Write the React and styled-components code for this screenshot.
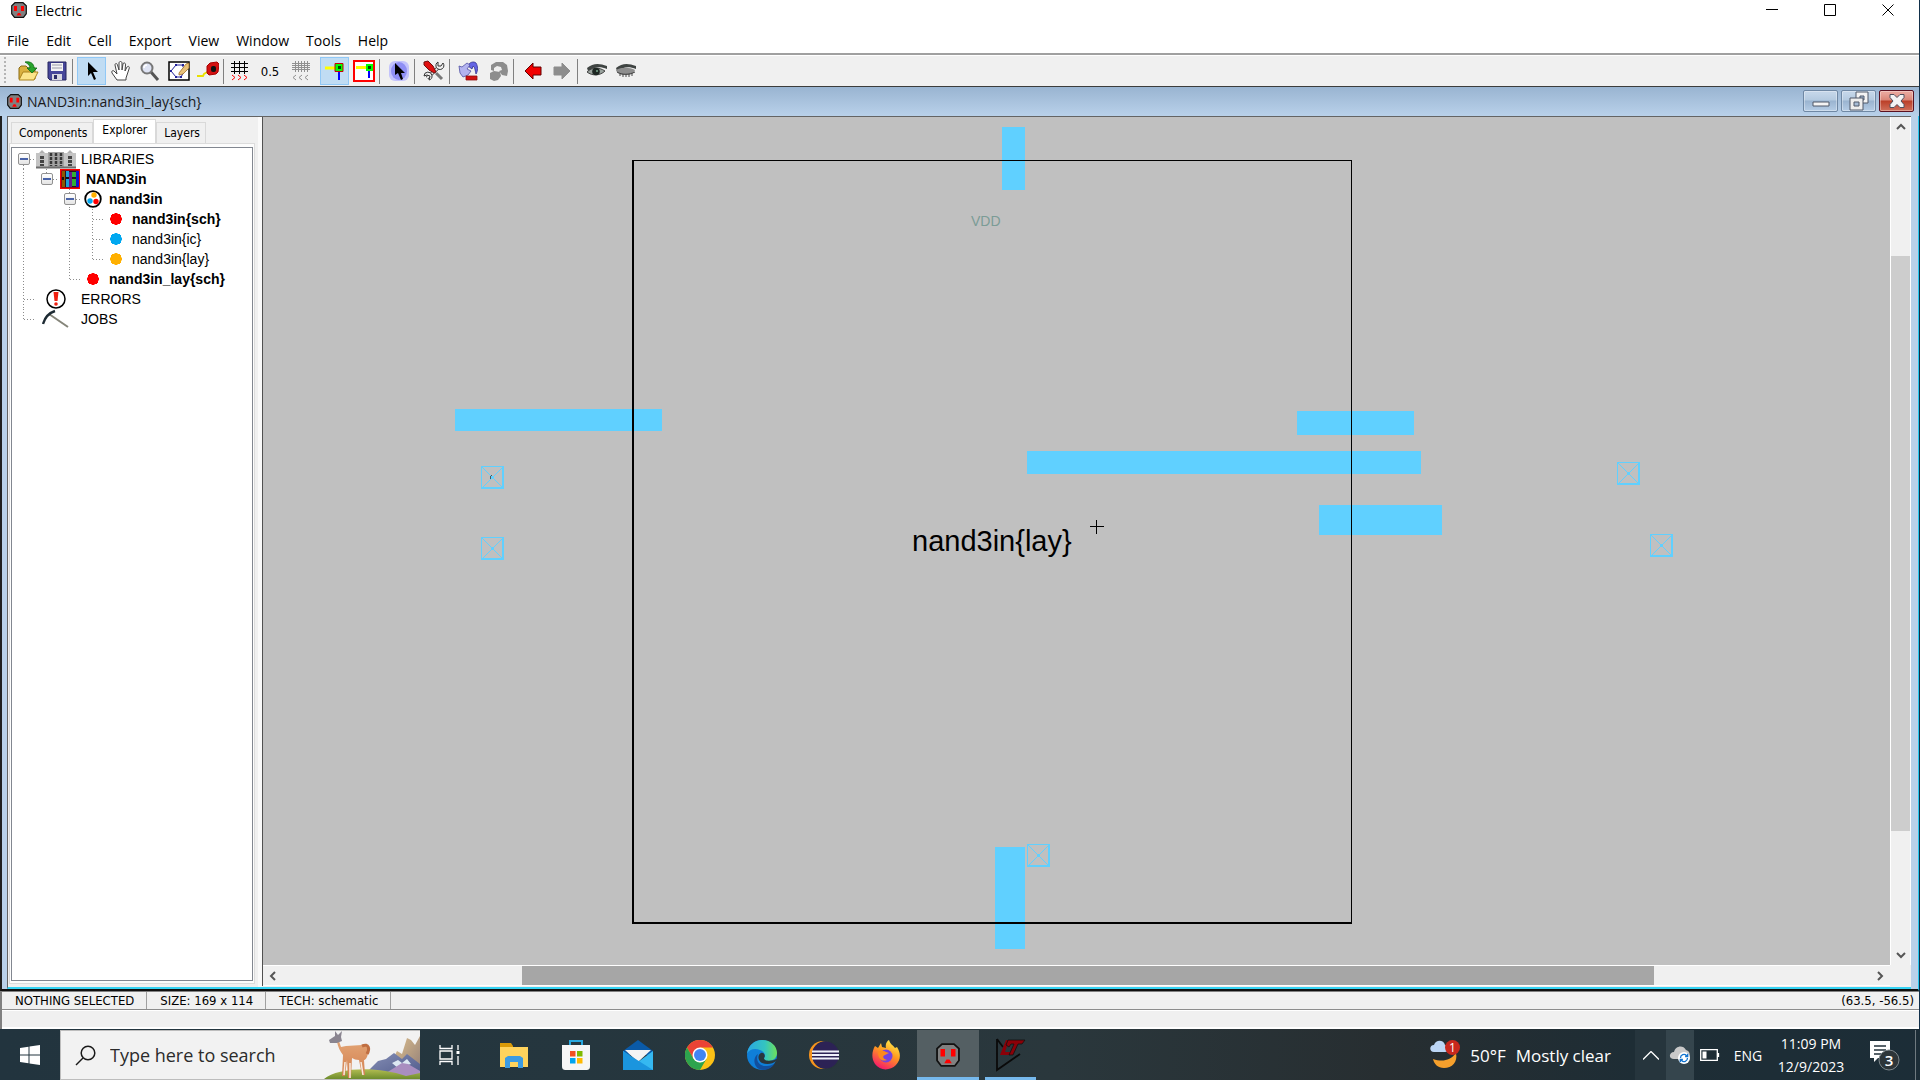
import React from "react";
import styled, { createGlobalStyle, css } from "styled-components";

const UI = '"Open Sans", "Noto Sans", sans-serif';
const TAHOMA = '"DejaVu Sans Condensed", "DejaVu Sans", sans-serif';
const ARIAL = '"Liberation Sans", Arial, sans-serif';

const GlobalStyle = createGlobalStyle`
  * { box-sizing: border-box; }
  body { margin: 0; background: #fff; color: #000; font-family: ${UI}; overflow: hidden; }
  button, input { font: inherit; color: inherit; margin: 0; padding: 0; border: 0; background: none; border-radius: 0; }
  svg { display: block; flex: none; }
`;

const Desktop = styled.div`
  display: flex;
  flex-direction: column;
  height: 100vh;
`;
const AppWindow = styled.main`
  flex: 1;
  min-height: 0;
  display: flex;
  flex-direction: column;
  border-right: 1px solid #12304a;
`;

/* ---------- title and menu ---------- */
const TitleBar = styled.header`
  display: flex;
  align-items: flex-start;
  height: 27px;
  padding: 0 2px 0 11px;
  background: #fff;
`;
const TitleText = styled.h1`
  flex: 1;
  display: flex;
  align-items: center;
  gap: 8px;
  height: 20px;
  margin: 0;
  font-size: 14px;
  font-weight: 400;
`;
const CaptionButton = styled.button`
  width: 58px;
  height: 20px;
  display: grid;
  place-items: center;
`;
const MenuBar = styled.nav`
  display: flex;
  align-items: flex-end;
  height: 28px;
  gap: 17px;
  padding: 0 7px 1px;
  background: #fff;
  border-bottom: 2px solid #a0a0a0;
`;
const MenuItem = styled.button`
  font-size: 14px;
  line-height: 22px;
`;

/* ---------- toolbar ---------- */
const ToolBar = styled.div`
  display: flex;
  align-items: center;
  height: 32px;
  padding-left: 4px;
  background: #f0f0f0;
  border-top: 1px solid #fff;
  border-bottom: 1px solid #3c3c3c;
`;
const Grip = styled.span`
  width: 2px;
  height: 28px;
  margin-right: 7px;
  background: repeating-linear-gradient(to bottom, #b4b4b4 0 2px, transparent 2px 4px);
`;
const ToolButton = styled.button`
  width: ${(p) => (p.$wide ? 32 : 29)}px;
  height: 28px;
  display: grid;
  place-items: center;
  font-family: ${TAHOMA};
  font-size: 13px;
  ${(p) =>
    p.$on &&
    css`
      background: #c0dcf3;
      border: 1px solid #90c8f6;
    `}
`;
const Divider = styled.span`
  width: ${(p) => (p.$tight ? 3 : 6)}px;
  height: 25px;
  background: linear-gradient(#808080, #808080) 1px 0 / 1px 100% no-repeat;
`;
const Spacer = styled.span`
  width: 5px;
`;

/* ---------- document window ---------- */
const DocTitle = styled.div`
  display: flex;
  align-items: center;
  height: 29px;
  padding: 0 5px 1px 7px;
  gap: 5px;
  background: linear-gradient(#99b4d1, #b9d1ea);
`;
const DocName = styled.h2`
  flex: 1;
  margin: 0;
  font-size: 14px;
  font-weight: 400;
  color: #1a1a1a;
`;
const DocButtons = styled.div`
  display: flex;
  gap: 3px;
`;
const DocButton = styled.button`
  width: 35px;
  height: 22px;
  display: grid;
  place-items: center;
  border: 1px solid ${(p) => (p.$close ? "#5a1020" : "#6f88a4")};
  border-radius: 2px;
  background: ${(p) =>
    p.$close
      ? "linear-gradient(#e8a499 0 12%, #d98577 45%, #bb3f28 50%, #d0705c)"
      : "linear-gradient(#c3d5e8 0 12%, #b4cae0 45%, #9ab4d0 50%, #b5cde6)"};
  box-shadow: inset 0 0 0 1px rgba(255, 255, 255, 0.35);
`;
const DocBody = styled.div`
  flex: 1;
  min-height: 0;
  display: flex;
  border-left: 2px solid #202020;
  border-right: 1px solid #28c8f0;
  border-bottom: 2px solid #101010;
  background: #b9d1ea;
  padding: 0 7px 0 5px;
`;
const DocInner = styled.div`
  flex: 1;
  min-width: 0;
  display: flex;
  border-left: 1px solid #646464;
  border-top: 1px solid #646464;
  border-bottom: 2px solid #35d3f3;
  background: #f0f0f0;
`;
const SidePanel = styled.aside`
  width: 254px;
  flex: none;
  display: flex;
  flex-direction: column;
  padding: 1px 3px 3px 1px;
  border-right: 4px solid #fafafa;
`;
const Tabs = styled.div`
  display: flex;
  align-items: flex-end;
  height: 25px;
  padding-left: 2px;
`;
const Tab = styled.button`
  height: ${(p) => (p.$active ? 24 : 21)}px;
  padding: ${(p) => (p.$active ? "0 8px 4px" : "0 5px 0 7px")};
  font-family: ${TAHOMA};
  font-size: 12px;
  line-height: 18px;
  background: ${(p) => (p.$active ? "#fff" : "#f0f0f0")};
  border: 1px solid #d9d9d9;
  border-bottom: 0;
`;
const TabPage = styled.div`
  flex: 1;
  display: flex;
  padding: 3px 1px 2px;
  border: 1px solid #dcdcdc;
  background: #fcfcfc;
`;
const Tree = styled.ul`
  flex: 1;
  list-style: none;
  margin: 0;
  padding: 1px 0 0;
  border: 1px solid #828790;
  background: #fff;
  font-family: ${ARIAL};
  font-size: 14px;
`;
const TreeRow = styled.li`
  display: flex;
  align-items: center;
  height: 20px;
  font-weight: ${(p) => (p.$bold ? 700 : 400)};
`;
const down = "repeating-linear-gradient(to bottom, #8c8c8c 0 1px, transparent 1px 3px)";
const across = "repeating-linear-gradient(to right, #8c8c8c 0 1px, transparent 1px 3px)";
const guides = {
  none: "none",
  line: `${down} 11px 0 / 1px 100% no-repeat`,
  tee: `${down} 11px 0 / 1px 100% no-repeat, ${across} 100% 50% / 50% 1px no-repeat`,
  ell: `${down} 11px 0 / 1px 50% no-repeat, ${across} 100% 50% / 50% 1px no-repeat`,
  start: `${down} 11px 100% / 1px 50% no-repeat, ${across} 100% 50% / 50% 1px no-repeat`,
};
const Guide = styled.span`
  width: 23px;
  height: 20px;
  flex: none;
  display: grid;
  place-items: center;
  background: ${(p) => guides[p.$kind]};
`;
const Toggle = styled.button`
  width: 12px;
  height: 12px;
  display: grid;
  place-items: center;
  border: 1px solid #919191;
  border-radius: 2px;
  background: linear-gradient(#fff, #e4e4e4);
`;
const Minus = styled.span`
  width: 8px;
  height: 2px;
  background: #4a63a8;
`;
const TreeIcon = styled.span`
  width: ${(p) => (p.$root ? 42 : 24)}px;
  height: 20px;
  margin-right: 4px;
  display: grid;
  place-items: center;
`;

/* ---------- canvas and scroll bars ---------- */
const EditArea = styled.section`
  flex: 1;
  min-width: 0;
  display: grid;
  grid-template-columns: 1fr 21px;
  grid-template-rows: 1fr 21px;
  border-left: 1px solid #505050;
  margin-bottom: 1px;
`;
const Canvas = styled.div`
  position: relative;
  overflow: hidden;
  background: #c0c0c0;
`;
const CanvasLabel = styled.span`
  position: absolute;
  left: ${(p) => p.$x}px;
  top: ${(p) => p.$y}px;
  font-family: ${ARIAL};
  font-size: ${(p) => p.$size}px;
  line-height: ${(p) => p.$size}px;
  color: ${(p) => p.$color};
  white-space: nowrap;
`;
const ScrollBar = styled.div`
  display: flex;
  flex-direction: ${(p) => (p.$vertical ? "column" : "row")};
  ${(p) => (p.$vertical ? "border-left" : "border-top")}: 1px solid #fff;
  ${(p) => (p.$vertical ? "border-right" : "border-bottom")}: 1px solid #fff;
  background: #f0f0f0;
`;
const ScrollArrow = styled.button`
  width: 20px;
  height: 20px;
  flex: none;
  display: grid;
  place-items: center;
`;
const ScrollPart = styled.div`
  flex: ${(p) => p.$part} 1 0;
  background: ${(p) => p.$color || "none"};
`;

/* ---------- status ---------- */
const StatusBar = styled.footer`
  background: #f0f0f0;
  border: solid #808080;
  border-width: 1px 0 0 2px;
  font-family: ${TAHOMA};
  font-size: 13px;
`;
const StatusRow = styled.div`
  display: flex;
  height: 18px;
  padding-right: 5px;
  border-bottom: 1px solid #8c8c8c;
`;
const StatusCell = styled.span`
  padding: 0 12px 0 13px;
  line-height: 17px;
  border-right: 1px solid #a0a0a0;
`;
const Coordinates = styled.output`
  margin-left: auto;
  line-height: 17px;
`;
const MessageRow = styled.div`
  height: 19px;
  border-top: 1px solid #fff;
  border-bottom: 2px solid #fff;
`;

/* ---------- taskbar ---------- */
const TaskBar = styled.footer`
  display: flex;
  height: 51px;
  padding-top: 1px;
  color: #fff;
  background: linear-gradient(90deg, #22343e 0, #25363e 30%, #2a373c 55%, #272e31 72%, #1e2d35 85%, #1c2d37);
`;
const StartButton = styled.button`
  width: 60px;
  display: grid;
  place-items: center;
`;
const SearchBox = styled.label`
  width: 360px;
  display: flex;
  align-items: center;
  padding-left: 14px;
  background: #f2f2f2;
  border: solid #bdbdbd;
  border-width: 1px 0 1px 1px;
  color: #1f1f1f;
`;
const SearchInput = styled.input`
  flex: 1;
  min-width: 0;
  margin-left: 14px;
  font-size: 18px;
  outline: 0;
  &::placeholder { color: #2b2b2b; opacity: 1; }
`;
const TaskViewButton = styled.button`
  width: 60px;
  margin-right: 3px;
  display: grid;
  place-items: center;
`;
const TaskButton = styled.button`
  width: 62px;
  display: grid;
  place-items: center;
  ${(p) =>
    p.$active &&
    css`
      background: #545f63;
      box-shadow: inset 0 -3px #76b9ed;
    `}
  ${(p) =>
    p.$running &&
    css`
      background: linear-gradient(#76b9ed, #76b9ed) 50% 100% / 51px 3px no-repeat;
    `}
`;
const Weather = styled.button`
  margin-left: auto;
  display: flex;
  align-items: center;
  gap: 10px;
  padding-right: 24px;
  font-size: 17px;
`;
const TrayButton = styled.button`
  width: ${(p) => p.$w}px;
  display: grid;
  place-items: center;
  font-size: 14px;
  background: ${(p) => p.$bg || "none"};
`;
const Clock = styled.button`
  width: 82px;
  font-size: 14px;
  line-height: 23px;
  text-align: center;
`;
const ShowDesktop = styled.button`
  width: 5px;
  border-left: 1px solid #6f7a80;
`;

/* ---------- icons ---------- */
const Outlet = ({ size = 16 }) => (
  <svg width={size} height={size} viewBox="0 0 16 16">
    <path d="M4 .7h8l3.300 3v8L12.500 15.300h-9L.7 11.700v-8z" fill="#808080" stroke="#111" strokeWidth="1.200" />
    <path d="M3 4h3v5H3zM10 4h3v5h-3zM7 11h2l1.500 2.500h-5z" fill="#f00" />
  </svg>
);
const Ico = ({ children, w = 22, h = 22 }) => (
  <svg width={w} height={h} viewBox={`0 0 ${w} ${h}`} fill="none">{children}</svg>
);
const OpenIcon = () => (
  <Ico>
    <path d="M2 8l2-2h5l2 2h7v11H2z" fill="#d9b13f" stroke="#8a6a14" />
    <path d="M2 20l4-8h15l-4 8z" fill="#fbe58a" stroke="#a9821c" />
    <path d="M8 2c6-1 9 2 9 6h3l-5 5-5-5h3c0-3-2-4-5-6z" fill="#27a32c" stroke="#0d6a14" strokeWidth=".8" />
  </Ico>
);
const SaveIcon = () => (
  <Ico w={20} h={20}>
    <path d="M1 1h18v18H3l-2-2z" fill="#46469a" stroke="#25255e" />
    <path d="M4 2h12v8H4z" fill="#f4f4f4" />
    <path d="M5 4h10M5 7h10" stroke="#9a9aa8" />
    <path d="M5 13h10v6H5z" fill="#d5d5df" />
    <path d="M7 14h3v4H7z" fill="#2a2a66" />
  </Ico>
);
const PointerIcon = () => (
  <Ico w={14} h={20}>
    <path d="M3 1v14l3-3 3 7 2-1-3-7h5z" fill="#000" />
  </Ico>
);
const HandIcon = () => (
  <Ico>
    <path d="M7 20L2 13c-1-2 1-3 2-2l3 3L5 5c0-2 2-2 2.500 0l1.500 5V3c0-2 3-2 3 0v7l1-6c.5-2 3-1 2.500 1l-.5 6 2-4c1-1 3-1 2 2l-3 9v2z" fill="#fff" stroke="#444" />
  </Ico>
);
const ZoomIcon = () => (
  <Ico>
    <path d="M12 12l7 8" stroke="#555" strokeWidth="3" />
    <circle cx="8" cy="8" r="5.500" fill="#dfe4f4" stroke="#777" strokeWidth="2" />
    <path d="M5 8c0-2 1-3 3-3" stroke="#fff" strokeWidth="1.500" />
  </Ico>
);
const OutlineIcon = () => (
  <Ico>
    <path d="M1 2h20v18H1z" fill="#fff" stroke="#000" strokeWidth="1.500" />
    <path d="M8 5h6l3 5-4 7H8l-5-6z" stroke="#22229a" />
    <path d="M11 13l7-9 3-1v5l-6 6-4 1z" fill="#e9c27a" stroke="#a0702a" strokeWidth=".8" />
    <path d="M14 4h2v2h-2zM7 4h2v2H7zM2 10h2v2H2zM7 16h2v2H7zM12 16h2v2h-2z" fill="#22229a" />
  </Ico>
);
const MeasureIcon = () => (
  <Ico>
    <path d="M0 16h6l1-2 5-3" stroke="#e8e000" strokeWidth="1.800" />
    <path d="M10 6l3-3 7-1 2 2-1 8-2 2-7 1-2-2z" fill="#d31111" stroke="#a00" />
    <rect x="14" y="6" width="5" height="6" rx="2" fill="#111" />
  </Ico>
);
const GridIcon = ({ muted }) => (
  <Ico w={20} h={22}>
    <path d={muted ? "M1 3.500h18M1 5.500h18M1 7.500h18M1 9.500h18M4.500 1v11M7.500 1v11M10.500 1v11M13.500 1v11M16.500 1v11" : "M1 3.500h17M1 7.500h17M1 11.500h17M4.500 1v13M9.500 1v13M14.500 1v13"} stroke={muted ? "#909090" : "#000"} />
    <path d={muted ? "M5 15l-3 2.500 3 2.500M11 15l-3 2.500 3 2.500M17 15l-3 2.500 3 2.500" : "M2 15l3 2.500-3 2.500M8 15l3 2.500-3 2.500M14 15l3 2.500-3 2.500"} stroke={muted ? "#909090" : "#f00"} />
  </Ico>
);
const WireIcon = ({ framed }) => (
  <Ico>
    {framed && <path d="M1 1h20v20H1z" fill="#fff" stroke="#f00" strokeWidth="2" />}
    <path d={framed ? "M3 7.500h12" : "M1 8h11"} stroke="#ff0" strokeWidth="3" />
    <path d={framed ? "M16 10v8" : "M15 12v8"} stroke="#00f" strokeWidth="2" />
    {framed ? <path d="M13 4h7v7h-7z" fill="#0f0" /> : <path d="M11 3.500h8v8h-8z" fill="#0f0" stroke="#c00" />}
    <path d={framed ? "M15 6h3v3h-3z" : "M14 6h3v3h-3z"} fill="#040" />
  </Ico>
);
const GlowPointerIcon = () => (
  <Ico>
    <rect x="1" y="1" width="20" height="20" rx="6" fill="#c3c3fb" />
    <ellipse cx="11" cy="11" rx="8" ry="9" fill="#8f8ff5" />
    <path d="M7 3v12l3-2 3 7 2-1-2-6h4z" fill="#000" />
  </Ico>
);
const ToolsIcon = () => (
  <Ico>
    <path d="M4 18l12-11" stroke="#333" strokeWidth="3.500" />
    <path d="M4 18l12-11" stroke="#eee" strokeWidth="2" />
    <path d="M20 3a4 4 0 1 1-5-1v4h3zM1 16a4 4 0 1 1 5 4l1-4-3-1z" fill="#eee" stroke="#333" />
    <path d="M13 13l6 6" stroke="#777" strokeWidth="3" />
    <path d="M1 2l4-1 5 5 3 6-2 1-5-3-5-5z" fill="#e01010" stroke="#701010" />
  </Ico>
);
const TurnIcon = ({ redo }) => (
  <Ico>
    <g transform={redo ? "translate(22 0) scale(-1 1)" : undefined}>
      {redo ? (
        <>
          <path d="M2 5l4-3h7l5 3v5l-3 1V8l-3-2-4 1-1 3 3 1-3 4-5 1-1-5z" fill="#8d8d8d" />
          <path d="M9 12l6-1 4 2v6l-4 2-4-1-3-4z" fill="#8d8d8d" />
        </>
      ) : (
        <>
          <path d="M10 6c1-4 6-5 8-3 2 3 2 8 0 11-1-4-1-7-3-8l-1 3z" fill="#6464e4" stroke="#30308e" strokeWidth=".8" />
          <path d="M1 6l3 1 5-4 3 2-3 4 4 2-3 4-5 2-3-4z" fill="#b3b3ef" stroke="#5050a4" strokeWidth=".8" />
          <path d="M8 16h11v4H8z" fill="#d11010" stroke="#8e1010" strokeWidth=".8" />
        </>
      )}
    </g>
  </Ico>
);
const ArrowIcon = ({ right }) => (
  <Ico w={18} h={18}>
    <path d={right ? "M1 5h8V1l8 8-8 8v-4H1z" : "M17 5H9V1L1 9l8 8v-4h8z"} fill={right ? "#8d8d8d" : "#f20000"} stroke={right ? "#8d8d8d" : "#620000"} />
  </Ico>
);
const EyeIcon = ({ closed }) => (
  <Ico>
    <path d="M1 8c6-5 12-5 20-2v3C14 6 8 7 2 11z" fill="#3f4442" />
    {closed ? (
      <>
        <path d="M1 10c5-3 14-3 19 0-1 4-5 5-10 5-4 0-8-1-9-5z" fill="#8e8e8e" />
        <path d="M2 12c5 3 12 3 18 0M5 14v2M8 14v3M11 14v3M14 14v3M17 13v3" stroke="#444" />
      </>
    ) : (
      <>
        <path d="M1 12c5-5 12-5 18-1-5 5-13 5-18 1z" fill="#9aa39e" stroke="#444" />
        <circle cx="10" cy="11.500" r="3.800" fill="#1d2622" />
        <circle cx="11" cy="11" r="1" fill="#7ba78e" />
      </>
    )}
  </Ico>
);
const LibraryBuilding = () => (
  <Ico w={40} h={20}>
    <path d="M0 4h40v14H0z" fill="#c4c4c4" />
    <path d="M3 4l3-3 3 3zM31 4l3-3 3 3z" fill="#b0b0b0" />
    <path d="M12 3h16v15H12z" fill="#a4a4a4" />
    <path d="M15 4v13M20 4v13M25 4v13" stroke="#383838" strokeWidth="2.500" strokeDasharray="3 1" />
    <path d="M6 7v10M34 7v10" stroke="#444" strokeWidth="4" strokeDasharray="3 1" />
    <path d="M0 18.500h40" stroke="#6e6e6e" strokeWidth="2" />
  </Ico>
);
const Books = () => (
  <Ico w={20} h={20}>
    <path d="M.75.75h18.500v18.500H.75z" fill="#2a1020" stroke="#f00" strokeWidth="1.500" />
    <path d="M2 2h3v16H2z" fill="#8c5a00" />
    <path d="M6 2h3v16H6z" fill="#1f9fd8" />
    <path d="M9 3h3v15H9z" fill="#6a1a8a" />
    <path d="M12 3h4v5h-4zM12 10h4v7h-4z" fill="#33b033" />
    <path d="M16 2h3v16h-3z" fill="#1010d0" />
    <path d="M2 8h2v3H2zM6 8h3v2H6z" fill="#111" />
  </Ico>
);
const CellGroup = () => (
  <Ico w={18} h={18}>
    <circle cx="9" cy="9" r="7.800" fill="#fff" stroke="#000" strokeWidth="1.800" />
    <circle cx="10" cy="5" r="2.700" fill="#ffb000" />
    <circle cx="6" cy="11" r="2.700" fill="#00a8f0" />
    <circle cx="12" cy="11.500" r="2.700" fill="#f00" />
  </Ico>
);
const Dot = ({ color }) => (
  <Ico w={14} h={14}>
    <path d="M5 2l1-1h2l1 1h2v1h1v2l1 1v2l-1 1v2h-1v1H9l-1 1H6l-1-1H3v-1H2V9L1 8V6l1-1V3h1V2z" fill={color} />
  </Ico>
);
const ErrorIcon = () => (
  <Ico w={20} h={20}>
    <circle cx="10" cy="10" r="9" fill="#fff" stroke="#000" strokeWidth="1.500" />
    <path d="M7.500 3h5l-1 9h-3z" fill="#f02010" />
    <circle cx="10" cy="15" r="1.800" fill="#f02010" />
  </Ico>
);
const JobIcon = () => (
  <Ico w={28} h={20}>
    <path d="M7 5l19 13" stroke="#85857a" strokeWidth="2" />
    <path d="M1 15C3 8 7 4 13 2" stroke="#1d2a33" strokeWidth="2.400" />
  </Ico>
);
const Chevron = ({ dir, stroke = "#555", w = 10 }) => (
  <svg width={w} height={w} viewBox="0 0 10 10" fill="none">
    <path
      d={{ up: "M1 7l4-4 4 4", down: "M1 3l4 4 4-4", left: "M7 1L3 5l4 4", right: "M3 1l4 4-4 4" }[dir]}
      stroke={stroke}
      strokeWidth="2"
    />
  </svg>
);

const Llama = () => (
  <svg width="96" height="48" viewBox="0 0 96 48">
    <defs>
      <linearGradient id="rock" x1="0" y1="0" x2="1" y2="1"><stop offset="0" stopColor="#e5c58e" /><stop offset="1" stopColor="#8b7a78" /></linearGradient>
      <linearGradient id="hill" x1="0" y1="0" x2="0" y2="1"><stop offset="0" stopColor="#b3bd52" /><stop offset="1" stopColor="#6d8c2c" /></linearGradient>
      <linearGradient id="fur" x1="0" y1="0" x2="0" y2="1"><stop offset="0" stopColor="#e4a878" /><stop offset="1" stopColor="#d27e4e" /></linearGradient>
      <linearGradient id="slope" x1="0" y1="0" x2="1" y2="1"><stop offset="0" stopColor="#8992b8" /><stop offset="1" stopColor="#4c5788" /></linearGradient>
    </defs>
    <path d="M66 34l7-14 5 3 5-16 4 2 4 5 5-9v43H66z" fill="url(#rock)" />
    <path d="M38 46l16-16 8-2 8-6 8 6 5-5 13 10v15H38z" fill="url(#slope)" />
    <path d="M68 32l6-3 4 3 5-4 4 5-7 2-5 3z" fill="#dce8f2" />
    <path d="M62 42l16-10 6 1 12 7v8H62z" fill="#a98ec0" />
    <path d="M0 48c14-12 54-13 82-3l14-3v6z" fill="url(#hill)" />
    <path d="M15 10l2 6 5-1 16-1c5 0 7 4 6 8-1 6-3 7-4 7l1 15h-3l-3-15c-3 0-5-1-7-2l-1 20h-3l-1-18-2 16h-3l1-21c-3-4-5-8-6-13l-2-5z" fill="url(#fur)" />
    <path d="M38 15c7-3 8 3 5 8" fill="none" stroke="#c06f42" strokeWidth="3" />
    <path d="M5 9l6-4V0l3 4 4-4-1 6 1 4-5 2-7 0z" fill="#8a8590" />
    <path d="M21 31l-1 13M26 32v15M37 31l2 13" stroke="#f7eadf" strokeWidth="1.500" />
  </svg>
);
const Folder = () => (
  <Ico w={28} h={26}>
    <path d="M0 1h11l2 3v5H0z" fill="#d99a08" />
    <path d="M0 5h28v20H0z" fill="#ffd35c" />
    <path d="M5 26V16l3-2h12l3 2v10h-5v-6h-8v6z" fill="#3c9be2" />
  </Ico>
);
const Store = () => (
  <Ico w={30} h={32}>
    <path d="M9 8V2h12v6" stroke="#28a8e0" strokeWidth="2" />
    <path d="M1 6h28v21c0 3-1 4-4 4H5c-3 0-4-1-4-4z" fill="#f6f6f6" />
    <path d="M9 12h5.500v5.500H9z" fill="#f25022" /><path d="M16 12h5.500v5.500H16z" fill="#7fba00" />
    <path d="M9 19h5.500v5.500H9z" fill="#00a4ef" /><path d="M16 19h5.500v5.500H16z" fill="#ffb900" />
  </Ico>
);
const Mail = () => (
  <Ico w={30} h={30}>
    <path d="M0 11L15 0l15 11v4H0z" fill="#0a5aa8" />
    <path d="M2 10h26L15 22z" fill="#f4f4f4" />
    <path d="M0 11l15 11 15-11v19H0z" fill="#35b8f1" />
    <path d="M0 11l30 19H0z" fill="#1b95de" />
  </Ico>
);
const Chrome = () => (
  <Ico w={30} h={30}>
    <circle cx="15" cy="15" r="15" fill="#fbc116" />
    <path d="M2 7.500A15 15 0 0 1 28 7.500H15L8.500 18.700z" fill="#ea4335" />
    <path d="M2 7.500L8.500 18.700 15 22.500l6.500-3.700L15 30A15 15 0 0 1 2 7.500z" fill="#2da44e" />
    <circle cx="15" cy="15" r="7.500" fill="#fff" /><circle cx="15" cy="15" r="6" fill="#4285f4" />
  </Ico>
);
const Edge = () => (
  <Ico w={30} h={30}>
    <defs>
      <linearGradient id="edgeTop" x1="0" y1="0" x2="1" y2="0"><stop offset="0" stopColor="#2aa7e4" /><stop offset=".6" stopColor="#34c4c0" /><stop offset="1" stopColor="#6ee05a" /></linearGradient>
    </defs>
    <circle cx="15" cy="15" r="15" fill="#0f7fd8" />
    <path d="M0 14C1 5 8 0 15 0c9 0 15 6 15 13 0 5-4 8-9 8-4 0-5-1-4-3 2-2 1-6-4-8C8 8 2 9 0 14z" fill="url(#edgeTop)" />
    <path d="M11 14c-3 7 2 13 9 12 3 0 6-1 8-3-4 7-11 8-16 6-6-3-6-12-1-15z" fill="#124f9c" />
    <path d="M17 18c2-2 0-6-3-5-4 2-3 8 1 10 5 2 11 1 14-2l-1 3c3-1 3-5 1-5-2 2-12 3-12-1z" fill="#29363c" />
  </Ico>
);
const Eclipse = () => (
  <Ico w={30} h={30}>
    <circle cx="14" cy="15" r="14" fill="#f7941e" />
    <circle cx="17" cy="15" r="14" fill="#28363c" />
    <circle cx="16.500" cy="15" r="13.500" fill="#2c2255" />
    <path d="M3 11.500h27M3 15h27M3 18.500h27" stroke="#f0f0fa" strokeWidth="1.800" />
  </Ico>
);
const Firefox = () => (
  <Ico w={30} h={30}>
    <defs>
      <linearGradient id="fox" x1=".8" y1="0" x2=".3" y2="1"><stop offset="0" stopColor="#fff44f" /><stop offset=".45" stopColor="#ff9a1f" /><stop offset="1" stopColor="#f5156c" /></linearGradient>
    </defs>
    <path d="M4 6l3 2 3-5 1 4 4 1c-1-4 1-7 3-8 1 4 4 5 6 8l2-1c4 6 4 13-1 18-6 6-16 6-21-1-4-6-3-13 0-18z" fill="url(#fox)" />
    <circle cx="15" cy="16" r="6.500" fill="#7543e0" />
    <path d="M7 12c3-2 6-1 8 0l3 1-4 2c-3 1-2 4 2 5-5 2-9-1-9-8z" fill="#ff8a1c" />
  </Ico>
);
const LtSpice = () => (
  <Ico w={32} h={36}>
    <path d="M3 2v31L26 17M3 2l6 8" stroke="#0a0a0a" strokeWidth="1.800" />
    <path d="M6 18L12 3h3l-4 12h6l-2 3z" fill="#8b0008" />
    <path d="M14 3h17l-3 4h-4l-5 11h-4l5-11h-3l-2 3-3-2z" fill="#8b0008" stroke="#111" strokeWidth=".8" />
  </Ico>
);
const WeatherIcon = () => (
  <Ico w={30} h={30}>
    <path d="M26 13c2 9-4 15-12 15-6 0-10-4-11-9 9 3 17 2 23-6z" fill="#f6a02c" />
    <path d="M4 12c-5 0-5-7 0-7 2-6 10-5 11 0 5 0 4 7 0 7z" fill="#bcd6f6" />
    <circle cx="22.500" cy="7.500" r="7.500" fill="#c9281d" />
    <text x="22.500" y="12" textAnchor="middle" fontFamily={UI} fontSize="12" fill="#fff">1</text>
  </Ico>
);
const CloudSync = () => (
  <Ico w={22} h={20}>
    <path d="M5 14c-6 0-5-7 0-7 1-6 9-8 12-2 5 1 5 9 0 9z" fill="#c9c9c9" />
    <circle cx="15" cy="13" r="6" fill="#fff" />
    <path d="M11.500 13a3.500 3.500 0 0 1 6-2.500l1 1M18.500 13a3.500 3.500 0 0 1-6 2.500l-1-1M18.700 8.800v2.700h-2.600M11.300 17.200v-2.700h2.600" stroke="#1273cf" strokeWidth="1.300" />
  </Ico>
);
const Notice = () => (
  <Ico w={34} h={34}>
    <path d="M3 3h20v17H11l-4 4v-4H3z" fill="#fff" />
    <path d="M7 8h12M7 12h12M7 16h8" stroke="#22313a" strokeWidth="1.300" />
    <circle cx="22" cy="22" r="10" fill="#2d3539" stroke="#7d868b" />
    <text x="22" y="27.500" textAnchor="middle" fontFamily={UI} fontSize="15" fontWeight="600" fill="#fff">3</text>
  </Ico>
);

/* ---------- schematic data ---------- */
const bars = [
  [739, 10, 23, 63],
  [732, 730, 30, 102],
  [192, 292, 207, 22],
  [1034, 294, 117, 24],
  [764, 334, 394, 23],
  [1056, 388, 123, 30],
];
const contacts = [
  [218, 349],
  [218, 420],
  [764, 727],
  [1354, 345],
  [1387, 417],
];

const treeRows = [
  { guides: ["start*"], icon: <LibraryBuilding />, root: true, label: "LIBRARIES" },
  { guides: ["line", "ell*"], icon: <Books />, bold: true, label: "NAND3in" },
  { guides: ["line", "none", "tee*"], icon: <CellGroup />, bold: true, label: "nand3in" },
  { guides: ["line", "none", "line", "tee"], icon: <Dot color="#f00" />, bold: true, label: "nand3in{sch}" },
  { guides: ["line", "none", "line", "tee"], icon: <Dot color="#00a8f0" />, label: "nand3in{ic}" },
  { guides: ["line", "none", "line", "ell"], icon: <Dot color="#ffb000" />, label: "nand3in{lay}" },
  { guides: ["line", "none", "ell"], icon: <Dot color="#f00" />, bold: true, label: "nand3in_lay{sch}" },
  { guides: ["tee"], icon: <ErrorIcon />, root: true, label: "ERRORS" },
  { guides: ["ell"], icon: <JobIcon />, root: true, label: "JOBS" },
];

const toolItems = [
  ["Open", <OpenIcon />],
  ["Save", <SaveIcon />],
  "|",
  ["Select", <PointerIcon />, { $on: true }],
  ["Pan", <HandIcon />],
  ["Zoom", <ZoomIcon />],
  ["Outline edit", <OutlineIcon />],
  ["Measure", <MeasureIcon />],
  "tight",
  ["Full grid", <GridIcon />],
  ["Grid size", "0.5", { $wide: true }],
  ["Half grid", <GridIcon muted />],
  "space",
  ["Objects", <WireIcon />, { $on: true }],
  ["Area", <WireIcon framed />],
  "|",
  ["Special select", <GlowPointerIcon />],
  "|",
  ["Preferences", <ToolsIcon />],
  "|",
  ["Undo", <TurnIcon />],
  ["Redo", <TurnIcon redo />],
  "|",
  ["Back", <ArrowIcon />],
  ["Forward", <ArrowIcon right />],
  "|",
  ["Expand", <EyeIcon />],
  ["Unexpand", <EyeIcon closed />],
];

const tasks = [
  ["File Explorer", <Folder />],
  ["Store", <Store />],
  ["Mail", <Mail />],
  ["Chrome", <Chrome />],
  ["Edge", <Edge />],
  ["Eclipse", <Eclipse />],
  ["Firefox", <Firefox />],
  ["Electric", <Outlet size={24} />, { $active: true }],
  ["LTspice", <LtSpice />, { $running: true }],
];

const Scroller = ({ vertical, parts, color }) => (
  <ScrollBar $vertical={vertical}>
    <ScrollArrow aria-label="Back"><Chevron dir={vertical ? "up" : "left"} /></ScrollArrow>
    <ScrollPart $part={parts[0]} />
    <ScrollPart $part={parts[1]} $color={color} />
    <ScrollPart $part={parts[2]} />
    <ScrollArrow aria-label="Forward"><Chevron dir={vertical ? "down" : "right"} /></ScrollArrow>
  </ScrollBar>
);

export default function App() {
  return (
    <Desktop>
      <GlobalStyle />
      <AppWindow>
        <TitleBar>
          <TitleText><Outlet /> Electric</TitleText>
          <CaptionButton aria-label="Minimize"><Ico w={12} h={12}><path d="M0 5.500h12" stroke="#000" /></Ico></CaptionButton>
          <CaptionButton aria-label="Maximize"><Ico w={12} h={12}><path d="M.5.5h11v11H.5z" stroke="#000" /></Ico></CaptionButton>
          <CaptionButton aria-label="Close"><Ico w={12} h={12}><path d="M.5.5l11 11M11.500.5l-11 11" stroke="#000" /></Ico></CaptionButton>
        </TitleBar>
        <MenuBar>
          {["File", "Edit", "Cell", "Export", "View", "Window", "Tools", "Help"].map((m) => (
            <MenuItem key={m}>{m}</MenuItem>
          ))}
        </MenuBar>
        <ToolBar>
          <Grip />
          {toolItems.map((t, i) => {
            if (t === "|" || t === "tight") return <Divider key={i} $tight={t === "tight"} />;
            if (t === "space") return <Spacer key={i} />;
            return <ToolButton key={i} aria-label={t[0]} {...t[2]}>{t[1]}</ToolButton>;
          })}
        </ToolBar>
        <DocTitle>
          <Outlet size={15} />
          <DocName>NAND3in:nand3in_lay{"{sch}"}</DocName>
          <DocButtons>
            <DocButton aria-label="Minimize document">
              <Ico w={18} h={14}><path d="M1 8h16v4H1z" fill="#f4f4f4" stroke="#505868" /></Ico>
            </DocButton>
            <DocButton aria-label="Restore document">
              <Ico w={20} h={20}>
                <path d="M7 1h12v11H7z" fill="#f4f4f4" stroke="#505868" />
                <path d="M11 5h4v4h-4z" fill="#a6bcd6" stroke="#505868" />
                <path d="M1 7h13v12H1z" fill="#eee" stroke="#505868" />
                <path d="M5 11h5v4H5z" fill="#a6bcd6" stroke="#505868" />
              </Ico>
            </DocButton>
            <DocButton $close aria-label="Close document">
              <Ico w={18} h={16}>
                <path d="M2 1.500h4l3 3 3-3h4v3L13 8l3 3.500v3h-4l-3-3-3 3H2v-3L5 8 2 4.500z" fill="#f4f4f4" stroke="#50505e" />
              </Ico>
            </DocButton>
          </DocButtons>
        </DocTitle>
        <DocBody>
          <DocInner>
            <SidePanel>
              <Tabs>
                <Tab>Components</Tab>
                <Tab $active>Explorer</Tab>
                <Tab>Layers</Tab>
              </Tabs>
              <TabPage>
                <Tree>
                  {treeRows.map((r) => (
                    <TreeRow key={r.label} $bold={r.bold}>
                      {r.guides.map((g, i) => (
                        <Guide key={i} $kind={g.replace("*", "")}>
                          {g.endsWith("*") && <Toggle aria-label={`Collapse ${r.label}`}><Minus /></Toggle>}
                        </Guide>
                      ))}
                      <TreeIcon $root={r.root}>{r.icon}</TreeIcon>
                      {r.label}
                    </TreeRow>
                  ))}
                </Tree>
              </TabPage>
            </SidePanel>
            <EditArea>
              <Canvas>
                <svg width="100%" height="100%" shapeRendering="crispEdges">
                  {bars.map(([x, y, w, h]) => (
                    <rect key={`${x},${y}`} x={x} y={y} width={w} height={h} fill="#60d0ff" />
                  ))}
                  {contacts.map(([x, y]) => (
                    <g key={`${x},${y}`} transform={`translate(${x} ${y})`} stroke="#60d0ff" fill="none">
                      <path d="M.5.5h22v22H.5z" />
                      <path d="M21.500 1v21M1 21.500h21" />
                      <path d="M1 1l21 21M22 1L1 22" strokeWidth="1.400" />
                      <path d="M10 10h3v3h-3z" fill="#60d0ff" stroke="none" />
                    </g>
                  ))}
                  <path d="M369 43h720v1H369zM1088 43h1v764h-1zM369 43h2v764h-2zM369 805h720v2H369z" fill="#000" />
                  <path d="M827 409h14v1h-14zM833 403h1v14h-1z" fill="#000" />
                  <path d="M227 359h1v3h-1zM228 358h1v1h-1z" fill="#555" />
                </svg>
                <CanvasLabel $x={708} $y={97} $size={14} $color="#7b9c96">VDD</CanvasLabel>
                <CanvasLabel $x={649} $y={410} $size={29} $color="#000">nand3in{"{lay}"}</CanvasLabel>
              </Canvas>
              <Scroller vertical parts={[119, 575, 114]} color="#cdcdcd" />
              <Scroller parts={[239, 1132, 216]} color="#a6a6a6" />
            </EditArea>
          </DocInner>
        </DocBody>
        <StatusBar>
          <StatusRow>
            <StatusCell>NOTHING SELECTED</StatusCell>
            <StatusCell>SIZE: 169 x 114</StatusCell>
            <StatusCell>TECH: schematic</StatusCell>
            <Coordinates>(63.5, -56.5)</Coordinates>
          </StatusRow>
          <MessageRow />
        </StatusBar>
      </AppWindow>
      <TaskBar>
        <StartButton aria-label="Start">
          <Ico w={20} h={20}><path d="M0 3l8.500-1.200V9.500H0zM9.500 1.600L20 0v9.500H9.500zM0 10.500h8.500v7.700L0 17zM9.500 10.500H20V20L9.500 18.400z" fill="#fff" /></Ico>
        </StartButton>
        <SearchBox>
          <Ico w={21} h={21}><circle cx="13" cy="8" r="6.800" stroke="#1a1a1a" strokeWidth="1.500" /><path d="M8 13l-7 7" stroke="#1a1a1a" strokeWidth="1.500" /></Ico>
          <SearchInput aria-label="Search" placeholder="Type here to search" />
          <Llama />
        </SearchBox>
        <TaskViewButton aria-label="Task View">
          <Ico w={22} h={20}><path d="M1 0v3.500h12V0M1 20v-3.500h12V20M1 6h12v8H1zM19 0v5M19 11v9" stroke="#fff" strokeWidth="1.300" /><path d="M17.500 6h3v3h-3z" fill="#fff" /></Ico>
        </TaskViewButton>
        {tasks.map(([name, icon, state]) => (
          <TaskButton key={name} aria-label={name} {...state}>{icon}</TaskButton>
        ))}
        <Weather><WeatherIcon /><span>50°F</span><span>Mostly clear</span></Weather>
        <TrayButton $w={31} $bg="#26353d" aria-label="Show hidden icons">
          <Ico w={16} h={9}><path d="M0 8.500l8-8 8 8" stroke="#fff" strokeWidth="1.300" /></Ico>
        </TrayButton>
        <TrayButton $w={28} $bg="#35454d" aria-label="OneDrive"><CloudSync /></TrayButton>
        <TrayButton $w={32} aria-label="Battery">
          <Ico w={20} h={12}><path d="M.7.7h16.600v10.600H.7zM18.500 4v4" stroke="#fff" strokeWidth="1.300" /><path d="M2.500 2.500h4v7h-4z" fill="#fff" /></Ico>
        </TrayButton>
        <TrayButton $w={44}>ENG</TrayButton>
        <Clock>11:09 PM<br />12/9/2023</Clock>
        <TrayButton $w={63} aria-label="Notifications"><Notice /></TrayButton>
        <ShowDesktop aria-label="Show desktop" />
      </TaskBar>
    </Desktop>
  );
}
